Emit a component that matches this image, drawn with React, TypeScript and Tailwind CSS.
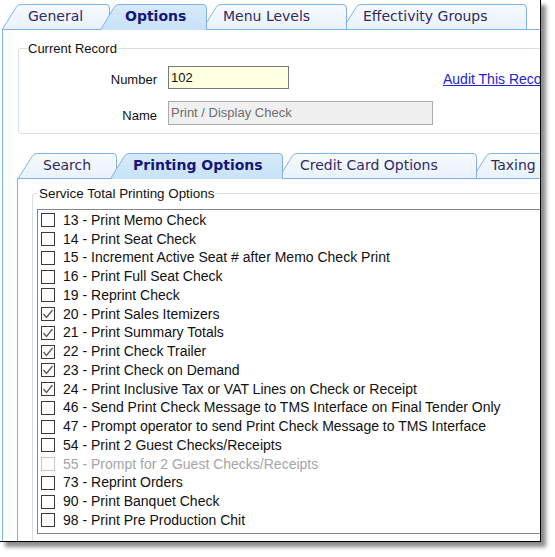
import React from "react"

type TabDef = {
  label: string
  w: number
  cls: string
  pl: string
  sel?: boolean
}

const topTabs: TabDef[] = [
  { label: "General", w: 108, cls: "w-[108px] z-20", pl: "pl-[26px]" },
  { label: "Options", w: 107, cls: "w-[107px] -ml-[10px] z-30", pl: "pl-[25px]", sel: true },
  { label: "Menu Levels", w: 145, cls: "w-[145px] -ml-[5px] z-[15]", pl: "pl-[21px]" },
  { label: "Effectivity Groups", w: 185, cls: "w-[185px] -ml-[5px] z-10", pl: "pl-[21px]" },
]

const innerTabs: TabDef[] = [
  { label: "Search", w: 99, cls: "w-[99px] z-20", pl: "pl-[25px]" },
  { label: "Printing Options", w: 173, cls: "w-[173px] -ml-[7px] z-30", pl: "pl-[23px]", sel: true },
  { label: "Credit Card Options", w: 199, cls: "w-[199px] -ml-[5px] z-[15]", pl: "pl-[22px]" },
  { label: "Taxing", w: 100, cls: "w-[100px] -ml-[5px] z-10", pl: "pl-[19px]" },
]

const options = [
  { n: 13, text: "Print Memo Check" },
  { n: 14, text: "Print Seat Check" },
  { n: 15, text: "Increment Active Seat # after Memo Check Print" },
  { n: 16, text: "Print Full Seat Check" },
  { n: 19, text: "Reprint Check" },
  { n: 20, text: "Print Sales Itemizers", checked: true },
  { n: 21, text: "Print Summary Totals", checked: true },
  { n: 22, text: "Print Check Trailer", checked: true },
  { n: 23, text: "Print Check on Demand", checked: true },
  { n: 24, text: "Print Inclusive Tax or VAT Lines on Check or Receipt", checked: true },
  { n: 46, text: "Send Print Check Message to TMS Interface on Final Tender Only" },
  { n: 47, text: "Prompt operator to send Print Check Message to TMS Interface" },
  { n: 54, text: "Print 2 Guest Checks/Receipts" },
  { n: 55, text: "Prompt for 2 Guest Checks/Receipts", disabled: true },
  { n: 73, text: "Reprint Orders" },
  { n: 90, text: "Print Banquet Check" },
  { n: 98, text: "Print Pre Production Chit" },
]

function Tab({ tab, id }: { tab: TabDef; id: string }) {
  const h = tab.sel ? 26 : 25
  const w = tab.w
  const d = `M0.5 ${h} L14 3.5 Q15.5 0.5 19 0.5 L${w - 4} 0.5 Q${w - 0.5} 0.5 ${w - 0.5} 4 L${w - 0.5} ${h}`
  return (
    <div className={`relative shrink-0 ${tab.sel ? "h-[26px]" : "h-[25px]"} ${tab.cls}`}>
      <svg className="absolute inset-0" width={w} height={h} viewBox={`0 0 ${w} ${h}`}>
        <defs>
          <linearGradient id={id} x1="0" y1="0" x2="0" y2="1">
            <stop offset="0" stopColor={tab.sel ? "#d6eafa" : "#f6fafe"} />
            <stop offset="1" stopColor={tab.sel ? "#c8e2f7" : "#e9f2fc"} />
          </linearGradient>
        </defs>
        <path d={d} fill={`url(#${id})`} stroke="#7fb2e6" strokeWidth="1" />
      </svg>
      <div
        className={`relative flex h-[25px] items-center whitespace-nowrap font-['DejaVu_Sans',sans-serif] text-[14px] ${tab.pl} ${
          tab.sel ? "font-bold text-[#15157a]" : "text-[#302a60]"
        }`}
      >
        {tab.label}
      </div>
    </div>
  )
}

function CheckBox({ checked, disabled }: { checked?: boolean; disabled?: boolean }) {
  return (
    <span
      className={`flex h-[14px] w-[14px] shrink-0 items-center justify-center border bg-white ${
        disabled ? "border-[#c6c6c6]" : "border-[#3a3a3a]"
      }`}
    >
      {checked && (
        <svg width="12" height="12" viewBox="0 0 12 12">
          <polyline points="1.5,6 4.5,9.5 10.5,2" fill="none" stroke="#5a5a5a" strokeWidth="1.3" />
        </svg>
      )}
    </span>
  )
}

export default function App() {
  return (
    <div className="h-[557px] w-[555px] bg-white">
      <div className="h-[542px] w-[541px] overflow-hidden border-r border-b border-black bg-white font-['Liberation_Sans',Arial,sans-serif] text-[13px] text-[#111] shadow-[5px_5px_4px_rgba(0,0,0,0.45)]">
        <div className="flex h-full flex-col pt-[4px] pl-[2px]">
          {/* top tab strip */}
          <div className="flex h-[25px] items-start">
            {topTabs.map((t, i) => (
              <Tab key={t.label} tab={t} id={`top${i}`} />
            ))}
          </div>

          <div className="flex-1 border-t border-l border-[#7fb2e6] bg-white">
            <fieldset className="mt-[11px] ml-[15px] w-[600px] rounded-[3px] border border-[#d5dfe5] pb-[8px]">
              <legend className="ml-[8px] px-[1px] leading-[15px]">Current Record</legend>
              <div className="grid grid-cols-[138px_auto] items-center gap-x-[11px] gap-y-[12px] pt-[10px]">
                <div className="pt-[4px] text-right leading-[15px]">Number</div>
                <div className="flex items-center">
                  <div className="flex h-[23px] w-[121px] items-center border border-[#7a7a7a] bg-[#ffffe1] pl-[2px]">
                    102
                  </div>
                  <a className="mt-[3px] ml-[154px] whitespace-nowrap text-[14px] leading-[17px] text-[#2323d8] underline">
                    Audit This Record
                  </a>
                </div>
                <div className="pt-[4px] text-right leading-[15px]">Name</div>
                <div className="flex h-[24px] w-[265px] items-center border border-[#ababab] bg-[#f0f0f0] pl-[2px] text-[#6d6d6d]">
                  Print / Display Check
                </div>
              </div>
            </fieldset>

            {/* inner tab control */}
            <div className="mt-[19px] ml-[14px] flex h-[600px] flex-col">
              <div className="flex h-[25px] items-start pl-[1px]">
                {innerTabs.map((t, i) => (
                  <Tab key={t.label} tab={t} id={`inner${i}`} />
                ))}
              </div>
              <div className="flex-1 border-t border-l border-[#7fb2e6] bg-white">
                <fieldset className="mt-[7px] ml-[14px] w-[600px] rounded-[3px] border border-[#d5dfe5] pb-[10px]">
                  <legend className="ml-[5px] px-[1px] text-[13.4px] leading-[15px]">
                    Service Total Printing Options
                  </legend>
                  <div className="mt-[8px] ml-[4px] h-[325px] w-[590px] border border-[#828790] pt-[1px] pl-[3px] text-[14px]">
                    {options.map((o) => (
                      <div key={o.n} className="flex h-[18.75px] items-center gap-[8px] whitespace-nowrap">
                        <CheckBox checked={o.checked} disabled={o.disabled} />
                        <span className={o.disabled ? "text-[#a6a6a6]" : ""}>
                          {o.n} - {o.text}
                        </span>
                      </div>
                    ))}
                  </div>
                </fieldset>
              </div>
            </div>
          </div>
        </div>
      </div>
    </div>
  )
}
